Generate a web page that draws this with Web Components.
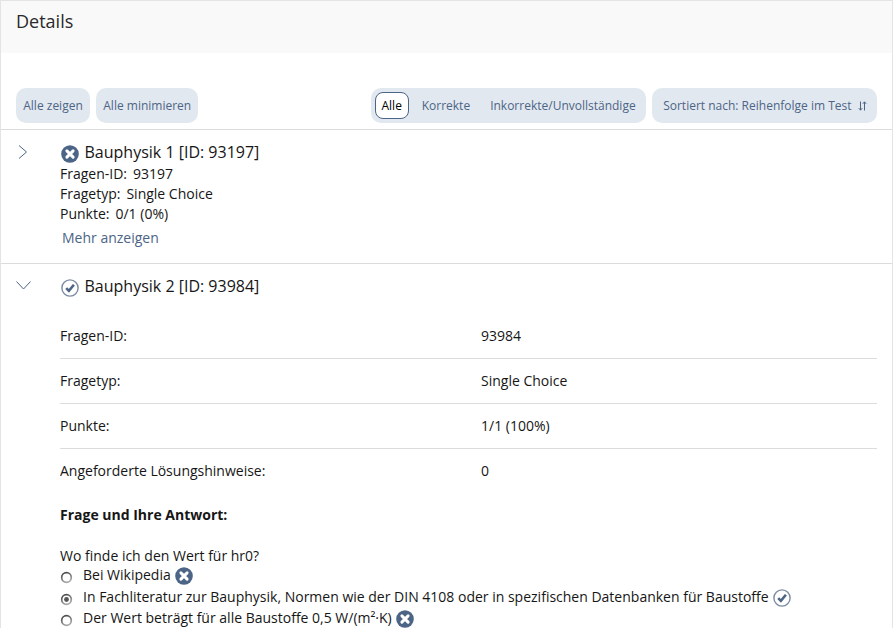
<!DOCTYPE html>
<html lang="de">
<head>
<meta charset="utf-8">
<title>Details</title>
<style>
   html, body { margin: 0; padding: 0; background: #fff; }
   body { font-family: "Open Sans", "Liberation Sans", sans-serif; font-size: 14px; color: #161616; height: 638px; overflow: hidden; }
</style>
</head>
<body>
<result-details></result-details>

<script>
const icons = {
   wrong: `<svg width="18" height="18" viewBox="0 0 18 18"><circle cx="9" cy="9" r="8.8" fill="#4c6586"/><path d="M5.9 5.9l6.2 6.2M12.1 5.9l-6.2 6.2" stroke="#fff" stroke-width="3" stroke-linecap="round"/></svg>`,
   right: `<svg width="18" height="18" viewBox="0 0 18 18"><circle cx="9" cy="9" r="8.1" fill="#fff" stroke="#7b8ba3" stroke-width="1.4"/><path d="M5.2 9.1l2.7 2.8 5-6.2" fill="none" stroke="#4c6586" stroke-width="2.6"/></svg>`
};

customElements.define('il-button', class extends HTMLElement {
   constructor() {
      super();
      this.attachShadow({ mode: 'open' }).innerHTML = `
<style>
   :host { display: flex; align-items: center; height: 35px; padding: 0 7.25px; background: #e2e8ef; border-radius: 10px; color: #4c6586; font-size: 12px; white-space: nowrap; }
</style>
<slot></slot>`;
   }
});

customElements.define('il-mode-control', class extends HTMLElement {
   constructor() {
      super();
      this.attachShadow({ mode: 'open' }).innerHTML = `
<style>
   :host { display: flex; align-items: center; gap: 0; height: 35px; padding: 0 4px; background: #e2e8ef; border-radius: 10px; color: #4c6586; font-size: 12px; white-space: nowrap; }
   span { display: flex; align-items: center; height: 27px; padding: 0 6px; }
   .on { box-sizing: border-box; width: 34px; justify-content: center; padding: 0; background: #fff; border: 1px solid #4c6586; border-radius: 8px; color: #000; margin-right: 7px; }
   .last { margin-left: 8px; }
</style>
<span class="on">Alle</span><span>Korrekte</span><span class="last">Inkorrekte/Unvollständige</span>`;
   }
});

customElements.define('il-toolbar', class extends HTMLElement {
   constructor() {
      super();
      this.attachShadow({ mode: 'open' }).innerHTML = `
<style>
   :host { display: flex; align-items: center; gap: 6px; padding: 35px 15px 6px 15px; border-bottom: 1px solid #dcdcdc; }
   .spacer { flex: 1; }
   .sort { padding: 0 10.5px 0 11.5px; }
   .sort svg { display: block; }
   .sort span { display: flex; align-items: center; gap: 6px; }
</style>
<il-button>Alle zeigen</il-button>
<il-button>Alle minimieren</il-button>
<div class="spacer"></div>
<il-mode-control></il-mode-control>
<il-button class="sort"><span>Sortiert nach: Reihenfolge im Test
   <svg width="9" height="10" viewBox="0 0 9 10"><path d="M2.5 0.5v8.5M0.8 7.2l1.7 2 1.7-2M6.5 9.5v-8.5M4.8 2.8l1.7-2 1.7 2" fill="none" stroke="#4c6586" stroke-width="1"/></svg></span></il-button>`;
   }
});

customElements.define('question-summary', class extends HTMLElement {
   constructor() {
      super();
      this.attachShadow({ mode: 'open' }).innerHTML = `
<style>
   :host { display: block; padding: 11px 15px 0 59px; height: 122px; border-bottom: 1px solid #dcdcdc; position: relative; }
   .chev { position: absolute; left: 17px; top: 15px; }
   h4 { display: flex; align-items: center; gap: 5.5px; margin: 0 0 1px 1px; font-size: 16px; font-weight: 400; line-height: 22px; }
   h4 svg { display: block; margin-top: 3px; }
   .line { display: flex; gap: 6px; line-height: 20px; }
   .more { color: #4c6586; margin: 4px 0 0 2px; line-height: 20px; }
</style>
<svg class="chev" width="10" height="14" viewBox="0 0 10 14"><path d="M1 0.5l7.5 6.5-7.5 6.5" fill="none" stroke="#4c6586" stroke-width="1"/></svg>
<h4>${icons.wrong}<span>Bauphysik 1 [ID: 93197]</span></h4>
<div class="line"><span>Fragen-ID:</span><span>93197</span></div>
<div class="line"><span>Fragetyp:</span><span>Single Choice</span></div>
<div class="line"><span>Punkte:</span><span>0/1 (0%)</span></div>
<div class="more">Mehr anzeigen</div>`;
   }
});

customElements.define('info-row', class extends HTMLElement {
   constructor() {
      super();
      this.attachShadow({ mode: 'open' }).innerHTML = `
<style>
   :host { display: grid; box-sizing: content-box; grid-template-columns: 421px 1fr; align-items: center; height: 42px; padding-bottom: 2px; border-bottom: 1px solid #dcdcdc; }
   :host([last]) { border-bottom: 0; }
</style>
<div><slot name="label"></slot></div>
<div><slot name="value"></slot></div>`;
   }
});

customElements.define('answer-option', class extends HTMLElement {
   constructor() {
      super();
      const mark = this.getAttribute('mark');
      const checked = this.hasAttribute('checked');
      this.attachShadow({ mode: 'open' }).innerHTML = `
<style>
   :host { display: flex; align-items: center; line-height: 21px; height: 21.5px; white-space: nowrap; }
   .radio { display: block; width: 13px; height: 13px; margin: 6px 10px 0 0; flex: none; }
   .text { margin-right: 4px; }
   .mark { display: block; margin-top: 3px; }
   .mark svg { display: block; }
</style>
<svg class="radio" viewBox="0 0 13 13"><defs><linearGradient id="g" x1="0" y1="0" x2="0.5" y2="1"><stop offset="0" stop-color="#3c3c3c"/><stop offset="1" stop-color="#a8a8a8"/></linearGradient></defs><circle cx="6.5" cy="6.5" r="4.8" fill="#fff" stroke="url(#g)" stroke-width="1.7"/>${checked ? '<circle cx="6.5" cy="6.5" r="2.4" fill="#555"/>' : ''}</svg>
<span class="text"><slot></slot></span>
<span class="mark">${icons[mark]}</span>`;
   }
});

customElements.define('question-detail', class extends HTMLElement {
   constructor() {
      super();
      this.attachShadow({ mode: 'open' }).innerHTML = `
<style>
   :host { display: block; padding: 11px 15px 0 59px; position: relative; }
   .chev { position: absolute; left: 15px; top: 17px; }
   h4 { display: flex; align-items: center; gap: 5.5px; margin: 0 0 17px 1px; font-size: 16px; font-weight: 400; line-height: 22px; }
   h4 svg { display: block; margin-top: 3px; }
</style>
<svg class="chev" width="15" height="9" viewBox="0 0 15 9"><path d="M0.5 0.5l7 7.5 7-7.5" fill="none" stroke="#4c6586" stroke-width="1"/></svg>
<h4>${icons.right}<span>Bauphysik 2 [ID: 93984]</span></h4>
<slot></slot>`;
   }
});

customElements.define('result-details', class extends HTMLElement {
   constructor() {
      super();
      this.attachShadow({ mode: 'open' }).innerHTML = `
<style>
   :host { display: block; box-sizing: border-box; width: 893px; height: 628px; overflow: hidden; border: 1px solid #e4e4e4; border-bottom: 0; background: #fff; }
   header { height: 52px; background: #f9f9f9; padding: 0 15px; font-size: 18px; line-height: 40px; color: #2a2a2a; }
   .title { font-weight: 700; margin-top: 12px; line-height: 20px; }
   .q { margin-top: 21px; line-height: 20px; margin-bottom: -2px; }
</style>
<header>Details</header>
<il-toolbar></il-toolbar>
<question-summary></question-summary>
<question-detail>
   <info-row><span slot="label">Fragen-ID:</span><span slot="value">93984</span></info-row>
   <info-row><span slot="label">Fragetyp:</span><span slot="value">Single Choice</span></info-row>
   <info-row><span slot="label">Punkte:</span><span slot="value">1/1 (100%)</span></info-row>
   <info-row last><span slot="label">Angeforderte Lösungshinweise:</span><span slot="value">0</span></info-row>
   <div class="title">Frage und Ihre Antwort:</div>
   <div class="q">Wo finde ich den Wert für hr0?</div>
   <answer-option mark="wrong">Bei Wikipedia</answer-option>
   <answer-option mark="right" checked>In Fachliteratur zur Bauphysik, Normen wie der DIN 4108 oder in spezifischen Datenbanken für Baustoffe</answer-option>
   <answer-option mark="wrong">Der Wert beträgt für alle Baustoffe 0,5 W/(m²·K)</answer-option>
</question-detail>`;
   }
});
</script>
</body>
</html>
